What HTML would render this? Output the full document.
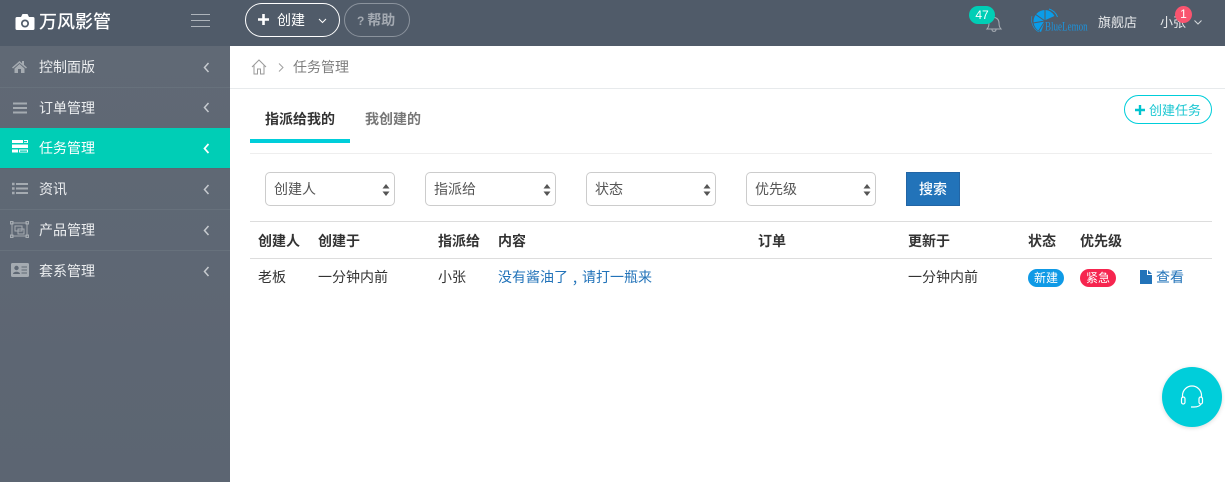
<!DOCTYPE html>
<html lang="zh">
<head>
<meta charset="utf-8">
<style>
*{box-sizing:border-box;margin:0;padding:0}
html,body{width:1225px;height:482px;overflow:hidden;background:#fff;font-family:"Liberation Sans","WenQuanYi Zen Hei","Noto Sans CJK TC",sans-serif;font-size:14px;color:#333}
.a{position:absolute;white-space:nowrap}
#top{position:absolute;left:0;top:0;width:1225px;height:46px;background:#505b69}
#side{position:absolute;left:0;top:46px;width:230px;height:436px;background:linear-gradient(#606975,#5c6572)}
.item{position:absolute;left:0;width:230px;height:41px;border-bottom:1px solid #67717c;color:#eceef0;font-size:14px;line-height:41px;padding-left:39px}
.item.on{background:#00ceb6;color:#fff;border-bottom:1px solid #5c6572}
.item svg{position:absolute}
.sel{position:absolute;top:172px;height:34px;border:1px solid #ccc;border-radius:5px;background:#fff;line-height:32px;padding-left:8px;color:#555;font-size:14px}
.sel svg{position:absolute;right:4px;top:11px}
.th{position:absolute;top:231px;font-weight:bold;color:#333;font-size:14px;line-height:20px;white-space:nowrap}
.td{position:absolute;top:267px;color:#333;font-size:14px;line-height:20px;white-space:nowrap}
.pill{position:absolute;top:269px;width:36px;height:18px;border-radius:9px;color:#fff;font-size:12px;line-height:18px;text-align:center}
</style>
</head>
<body>
<div id="top"></div>
<svg class="a" style="left:15px;top:13px" width="20" height="18" viewBox="0 0 20 18"><path fill="#fff" d="M2 4h4l1.5-3h5L14 4h4a1.500 1.500 0 0 1 1.500 1.500v10A1.500 1.500 0 0 1 18 17H2a1.500 1.500 0 0 1-1.500-1.500v-10A1.500 1.500 0 0 1 2 4z"/><circle cx="10" cy="10.500" r="4" fill="#505b69"/><circle cx="10" cy="10.500" r="2.300" fill="#fff"/></svg>
<div class="a" style="left:39px;top:10px;font-size:18px;line-height:25px;color:#fff;font-weight:500">万风影管</div>
<svg class="a" style="left:191px;top:14px" width="20" height="14"><path d="M0 .5h19M0 6.500h19M0 12.500h19" stroke="#aeb4bb" stroke-width="1"/></svg>

<div class="a" style="left:245px;top:3px;width:95px;height:34px;border:1px solid #fff;border-radius:17px"></div>
<svg class="a" style="left:258px;top:14px" width="11" height="11"><path d="M5.500 0v11M0 5.500h11" stroke="#fff" stroke-width="2.600"/></svg>
<div class="a" style="left:277px;top:10px;color:#fff;font-size:14px;line-height:20px">创建</div>
<svg class="a" style="left:318px;top:18px" width="9" height="6"><path d="M1 1l3.500 3.500L8 1" stroke="#fff" fill="none"/></svg>
<div class="a" style="left:344px;top:3px;width:66px;height:34px;border:1px solid #8b939d;border-radius:17px"></div>
<div class="a" style="left:357px;top:10px;color:#a3a9b1;font-size:14px;line-height:20px;font-weight:bold"><span style="font-size:12px">?</span> <span style="margin-left:-1px">帮助</span></div>

<svg class="a" style="left:985px;top:14px" width="18" height="19" viewBox="0 0 18 19"><path d="M2 15c1.500-1.500 2-3 2-6 0-3 2-5.500 5-5.500S14 6 14 9c0 3 .5 4.500 2 6zM7 15.500c0 2.500 4 2.500 4 0" fill="none" stroke="#a8aeb5" stroke-width="1"/></svg>
<div class="a" style="left:969px;top:6px;width:26px;height:18px;border-radius:9px;background:#00ceb6;color:#fff;font-size:12px;line-height:18px;text-align:center">47</div>

<svg class="a" style="left:1031px;top:8px" width="28" height="26" viewBox="0 0 28 26"><path d="M14 13V2A11.500 11.500 0 0 0 2.500 13 11.500 11.500 0 0 0 10 24L14 13z" fill="#0b9ce8"/><path d="M14.500 12V2a11 11 0 0 1 9 6z" fill="#0b9ce8"/><path d="M14 13L14 1M14 13L4 6M14 13L2 15M14 13L7 24" stroke="#505b69" stroke-width="1"/><path d="M18 1a13 13 0 0 1 8.500 8" stroke="#0b9ce8" fill="none"/><path d="M1 8a14 14 0 0 0 7 16" stroke="#0b9ce8" fill="none" stroke-width=".6"/></svg>
<div class="a" style="left:1045px;top:21px;font-family:'Liberation Serif',serif;font-size:10.500px;line-height:13px;color:#1b93dc;transform-origin:0 50%;transform:scale(.86,1.15)">BlueLemon</div>
<div class="a" style="left:1098px;top:13px;font-size:13px;line-height:19px;color:#e6e8ea">旗舰店</div>
<div class="a" style="left:1160px;top:13px;font-size:13px;line-height:19px;color:#e6e8ea">小张</div>
<svg class="a" style="left:1194px;top:20px" width="8" height="5"><path d="M.5.500L4 4 7.500.500" stroke="#d5d8dc" fill="none"/></svg>
<div class="a" style="left:1175px;top:6px;width:17px;height:17px;border-radius:50%;background:#f9546f;color:#fff;font-size:12px;line-height:17px;text-align:center">1</div>

<div id="side"></div>
<div class="item" style="top:46px;line-height:43px;height:42px">控制面版
<svg style="left:12px;top:14px" width="15" height="13" viewBox="0 0 15 13"><path fill="#a5abb1" d="M7.500 1L0 7.500l1 1L7.500 3l6.500 5.500 1-1-3-2.600V1h-2v2.200zM2.500 8.500V13h3.500V9h3v4h3.500V8.500L7.500 4z"/></svg>
<svg style="left:203px;top:16px" width="7" height="11"><path d="M5.500 1L1.500 5.500l4 4.500" stroke="#c6cacf" stroke-width="1.500" fill="none"/></svg></div>
<div class="item" style="top:88px;height:40px;line-height:40px;border-bottom:0">订单管理
<svg style="left:13px;top:14px" width="14" height="12"><path d="M0 1.500h14M0 6h14M0 10.500h14" stroke="#a5abb1" stroke-width="2"/></svg>
<svg style="left:203px;top:14px" width="7" height="11"><path d="M5.500 1L1.500 5.500l4 4.500" stroke="#c6cacf" stroke-width="1.500" fill="none"/></svg></div>
<div class="item on" style="top:128px">任务管理
<svg style="left:12px;top:12px" width="16" height="13"><path fill="#fff" d="M0 0h11v3H0zM12 0h4v3h-4zM0 4.500h16v3.500H0zM0 9.500h6v3H0zM7 9.500h9v3H7z"/><path fill="#00ceb6" d="M11.500 1h3.500v1.200h-3.500zM8 10.500h7v1.200H8z"/></svg>
<svg style="left:203px;top:15px" width="7" height="11"><path d="M5.500 1L1.500 5.500l4 4.500" stroke="#fff" stroke-width="1.700" fill="none"/></svg></div>
<div class="item" style="top:169px">资讯
<svg style="left:12px;top:13px" width="16" height="13"><path d="M4 2h12M4 6.500h12M4 11h12" stroke="#a5abb1" stroke-width="2"/><path d="M0 2h3M0 6.500h3M0 11h3" stroke="#a5abb1" stroke-width="2.400" stroke-dasharray="2.600 .4"/></svg>
<svg style="left:203px;top:15px" width="7" height="11"><path d="M5.500 1L1.500 5.500l4 4.500" stroke="#c6cacf" stroke-width="1.500" fill="none"/></svg></div>
<div class="item" style="top:210px">产品管理
<svg style="left:10px;top:11px" width="19" height="17" viewBox="0 0 19 17" fill="none" stroke="#a5abb1"><rect x="2" y="2" width="15" height="13"/><rect x="5" y="5" width="7" height="5"/><rect x="8" y="8" width="6" height="5"/><rect x=".5" y=".5" width="2.500" height="2.500"/><rect x="16" y=".5" width="2.500" height="2.500"/><rect x=".5" y="14" width="2.500" height="2.500"/><rect x="16" y="14" width="2.500" height="2.500"/></svg>
<svg style="left:203px;top:15px" width="7" height="11"><path d="M5.500 1L1.500 5.500l4 4.500" stroke="#c6cacf" stroke-width="1.500" fill="none"/></svg></div>
<div class="item" style="top:251px;border-bottom:0">套系管理
<svg style="left:11px;top:12px" width="18" height="14" viewBox="0 0 18 14"><rect width="18" height="14" rx="1.500" fill="#a5abb1"/><circle cx="5.500" cy="5" r="2.200" fill="#5f6874"/><path d="M2 11c0-3 7-3 7 0z" fill="#5f6874"/><path d="M10.500 4h5.500M10.500 7h5.500M10.500 10h5.500" stroke="#5f6874"/></svg>
<svg style="left:203px;top:15px" width="7" height="11"><path d="M5.500 1L1.500 5.500l4 4.500" stroke="#c6cacf" stroke-width="1.500" fill="none"/></svg></div>

<div class="a" style="left:230px;top:88px;width:995px;height:1px;background:#e7eaec"></div>
<svg class="a" style="left:251px;top:59px" width="16" height="16" viewBox="0 0 16 16" fill="none" stroke="#9a9a9a"><path d="M1 8l7-7 7 7M3 6.500V15h3.500v-5h3v5H13V6.500"/></svg>
<svg class="a" style="left:278px;top:63px" width="6" height="9"><path d="M1 .5l4 4-4 4" stroke="#a0a0a0" fill="none"/></svg>
<div class="a" style="left:293px;top:57px;color:#7d7d7d;font-size:14px;line-height:20px">任务管理</div>

<div class="a" style="left:1124px;top:95px;width:88px;height:29px;border:1px solid #00ceda;border-radius:15px"></div>
<svg class="a" style="left:1135px;top:105px" width="10" height="10"><path d="M5 0v10M0 5h10" stroke="#00c4cf" stroke-width="2.400"/></svg>
<div class="a" style="left:1149px;top:101px;color:#1cc7d2;font-size:13px;line-height:19px">创建任务</div>

<div class="a" style="left:265px;top:109px;font-weight:bold;color:#333;font-size:14px;line-height:20px">指派给我的</div>
<div class="a" style="left:365px;top:109px;font-weight:bold;color:#777;font-size:14px;line-height:20px">我创建的</div>
<div class="a" style="left:250px;top:139px;width:100px;height:4px;background:#00ceda"></div>
<div class="a" style="left:250px;top:153px;width:962px;height:1px;background:#eee"></div>

<div class="sel" style="left:265px;width:130px">创建人<svg width="8" height="12"><path fill="#555" d="M4 0l3.500 4.500h-7zM4 12L.5 7.500h7z"/></svg></div>
<div class="sel" style="left:425px;width:131px">指派给<svg width="8" height="12"><path fill="#555" d="M4 0l3.500 4.500h-7zM4 12L.5 7.500h7z"/></svg></div>
<div class="sel" style="left:586px;width:130px">状态<svg width="8" height="12"><path fill="#555" d="M4 0l3.500 4.500h-7zM4 12L.5 7.500h7z"/></svg></div>
<div class="sel" style="left:746px;width:130px">优先级<svg width="8" height="12"><path fill="#555" d="M4 0l3.500 4.500h-7zM4 12L.5 7.500h7z"/></svg></div>
<div class="a" style="left:906px;top:172px;width:54px;height:34px;background:#2273b9;border:1px solid #2265a5;color:#fff;font-size:14px;font-weight:500;line-height:32px;text-align:center">搜索</div>

<div class="a" style="left:250px;top:221px;width:962px;height:1px;background:#ddd"></div>
<div class="a" style="left:250px;top:258px;width:962px;height:1px;background:#ddd"></div>
<div class="th" style="left:258px">创建人</div>
<div class="th" style="left:318px">创建于</div>
<div class="th" style="left:438px">指派给</div>
<div class="th" style="left:498px">内容</div>
<div class="th" style="left:758px">订单</div>
<div class="th" style="left:908px">更新于</div>
<div class="th" style="left:1028px">状态</div>
<div class="th" style="left:1080px">优先级</div>
<div class="td" style="left:258px">老板</div>
<div class="td" style="left:318px">一分钟内前</div>
<div class="td" style="left:438px">小张</div>
<div class="td" style="left:498px;color:#2273b9">没有酱油了<span lang="zh-TW" style="font-family:'Noto Sans CJK TC',sans-serif;position:relative;top:6px;line-height:1">，</span>请打一瓶来</div>
<div class="td" style="left:908px">一分钟内前</div>
<div class="pill" style="left:1028px;background:#0f9ae6">新建</div>
<div class="pill" style="left:1080px;background:#f6254f">紧急</div>
<svg class="a" style="left:1140px;top:270px" width="12" height="14" viewBox="0 0 12 14"><path fill="#2273b9" d="M0 0h7v5h5v9H0zM8 0l4 4H8z"/></svg>
<div class="td" style="left:1156px;color:#2273b9">查看</div>

<div class="a" style="left:1162px;top:367px;width:60px;height:60px;border-radius:50%;background:#00ceda;box-shadow:0 1px 4px rgba(0,0,0,.15)"></div>
<svg class="a" style="left:1180px;top:385px" width="24" height="24" viewBox="0 0 24 24" fill="none" stroke="#fff" stroke-width="1.200"><path d="M2.500 13V10.500a9.500 9.500 0 0 1 19 0V13"/><rect x="1.500" y="12" width="3.500" height="7" rx="1.700"/><rect x="19" y="12" width="3.500" height="7" rx="1.700"/><path d="M21 19c-1 2-4 3-7 3h-3"/></svg>
</body>
</html>
